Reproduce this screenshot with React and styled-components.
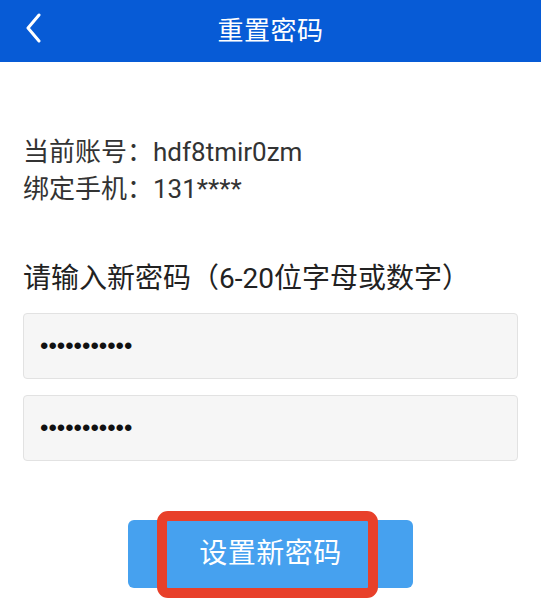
import styled, { createGlobalStyle } from "styled-components";

const GlobalStyle = createGlobalStyle`
  html, body {
    margin: 0;
    padding: 0;
    background: #ffffff;
  }
  body {
    font-family: Roboto, "Noto Sans CJK SC", "Noto Sans", sans-serif;
  }
`;

const Page = styled.div`
  width: 541px;
  height: 600px;
  overflow: hidden;
  background: #ffffff;
`;

const Header = styled.header`
  height: 62px;
  background: #075bd6;
  display: flex;
  align-items: center;
  justify-content: center;
  position: relative;
`;

const BackButton = styled.button`
  position: absolute;
  left: 18px;
  top: 10px;
  width: 32px;
  height: 36px;
  border: none;
  background: none;
  padding: 0;
  display: flex;
  align-items: center;
  justify-content: center;
`;

const Title = styled.h1`
  margin: 0;
  color: #ffffff;
  font-size: 26px;
  font-weight: 400;
  letter-spacing: 0.5px;
  margin-top: -6px;
`;

const Content = styled.main`
  padding: 0 23px;
  display: flex;
  flex-direction: column;
`;

const Info = styled.div`
  margin-top: 72px;
  color: #333333;
  font-size: 26px;
  line-height: 37px;
`;

const Label = styled.div`
  margin-top: 52px;
  color: #222222;
  font-size: 28px;
  line-height: 37px;
`;

const Fields = styled.div`
  margin-top: 16px;
  display: flex;
  flex-direction: column;
  gap: 16px;
`;

const PasswordInput = styled.input`
  box-sizing: border-box;
  width: 100%;
  height: 66px;
  padding: 0 16px;
  background: #f6f6f6;
  border: 1.5px solid #e2e2e2;
  border-radius: 4px;
  font-family: "Liberation Sans", sans-serif;
  font-size: 24px;
  color: #111111;
  outline: none;
`;

const ButtonRow = styled.div`
  margin-top: 59px;
  display: flex;
  justify-content: center;
`;

const SubmitButton = styled.button`
  position: relative;
  width: 285px;
  height: 68px;
  border: none;
  border-radius: 6px;
  background: #46a1ef;
  color: #ffffff;
  font-family: Roboto, "Noto Sans CJK SC", sans-serif;
  font-size: 28px;
  letter-spacing: 0.5px;
  padding: 0 0 6px;
`;

const Highlight = styled.span`
  position: absolute;
  left: 29px;
  top: -9px;
  width: 221px;
  height: 87px;
  box-sizing: border-box;
  border: 10px solid #e8402a;
  border-radius: 11px;
  pointer-events: none;
`;

const ChevronLeft = () => (
  <svg width="20" height="30" viewBox="0 0 20 30" fill="none">
    <path
      d="M15 2 L4 15 L15 28"
      stroke="#ffffff"
      strokeWidth="3"
      strokeLinecap="round"
      strokeLinejoin="round"
    />
  </svg>
);

const App = () => {
  return (
    <>
      <GlobalStyle />
      <Page>
        <Header>
          <BackButton aria-label="返回">
            <ChevronLeft />
          </BackButton>
          <Title>重置密码</Title>
        </Header>
        <Content>
          <Info>
            <div>当前账号：hdf8tmir0zm</div>
            <div>绑定手机：131****</div>
          </Info>
          <Label>请输入新密码（6-20位字母或数字）</Label>
          <Fields>
            <PasswordInput type="password" value="12345678901" readOnly />
            <PasswordInput type="password" value="12345678901" readOnly />
          </Fields>
          <ButtonRow>
            <SubmitButton>
              设置新密码
              <Highlight />
            </SubmitButton>
          </ButtonRow>
        </Content>
      </Page>
    </>
  );
};

export default App;
